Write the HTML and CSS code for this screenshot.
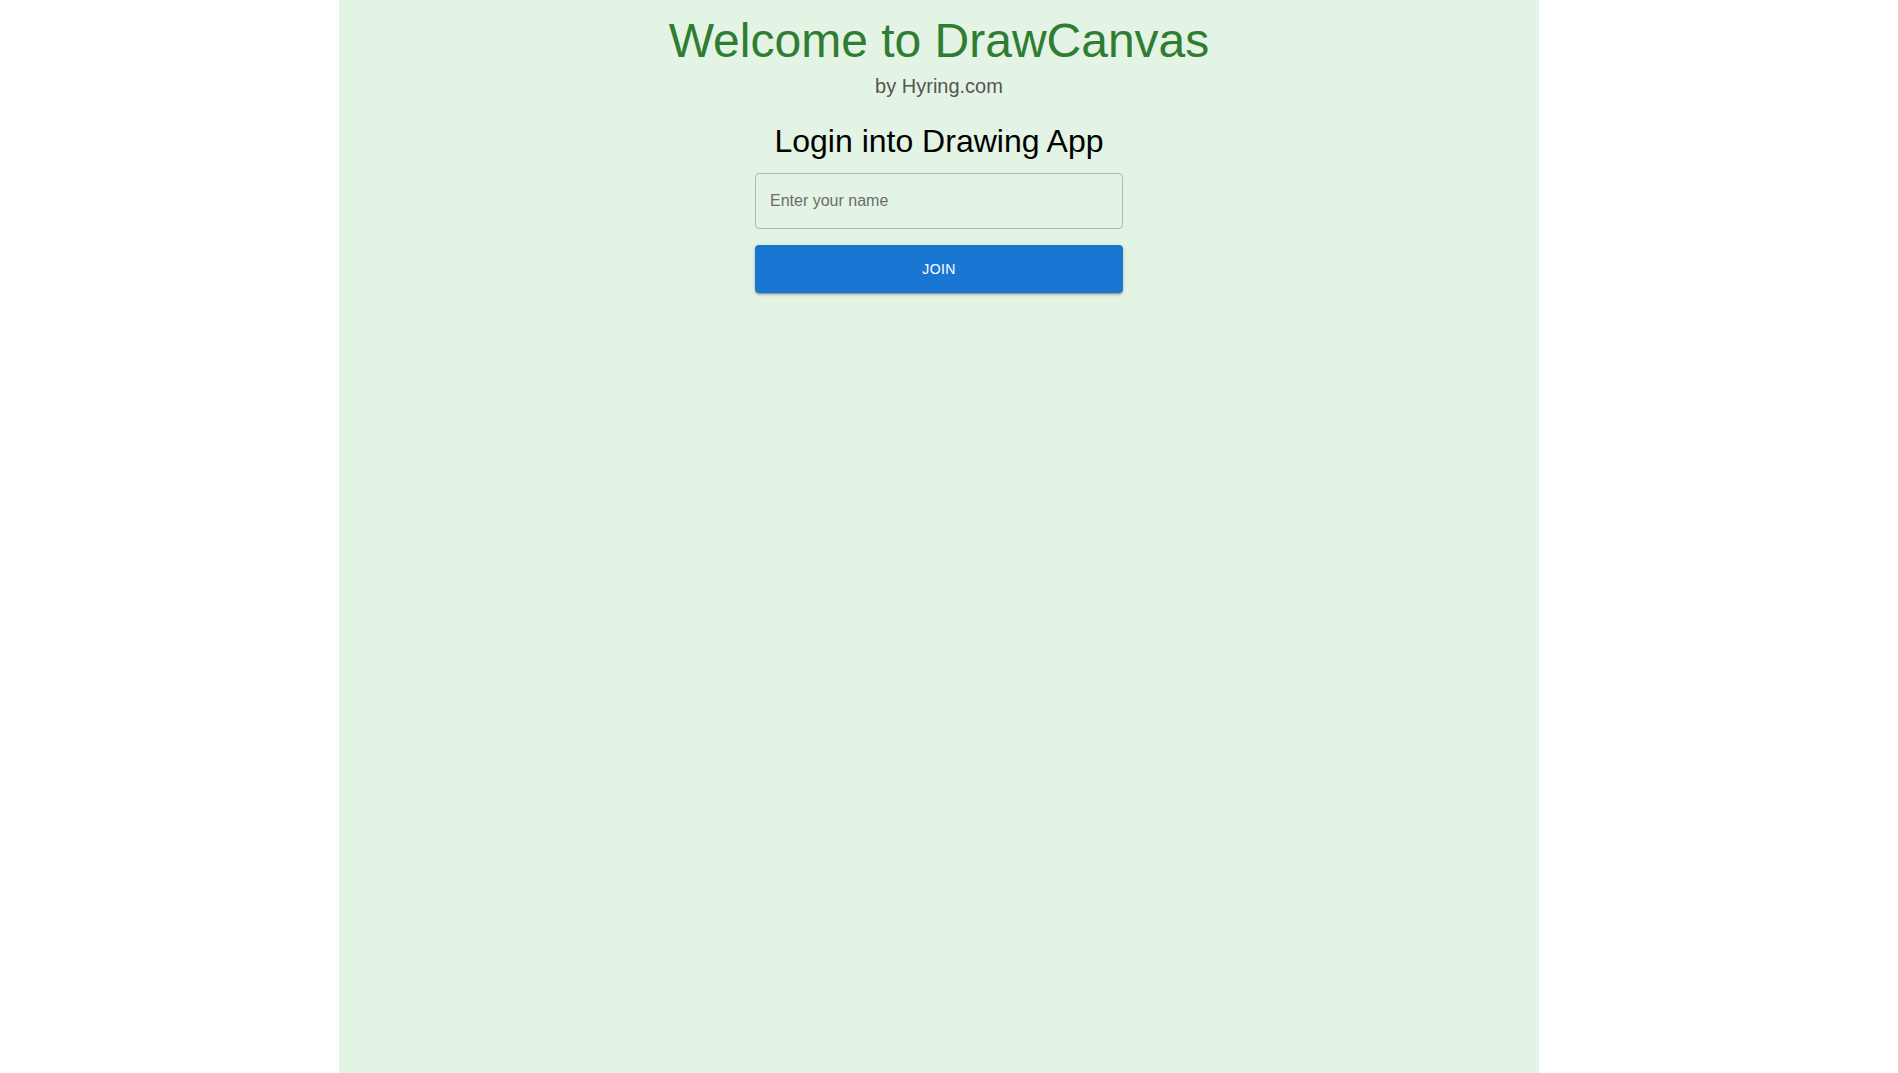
FILE: index.html
```html
<!DOCTYPE html>
<html lang="en">
<head>
<meta charset="utf-8">
<title>DrawCanvas</title>
<link rel="stylesheet" href="styles.css">
</head>
<body>
<div class="page">
  <main class="panel">
    <h1 class="title">Welcome to DrawCanvas</h1>
    <p class="sub">by Hyring.com</p>
    <h2 class="login">Login into Drawing App</h2>
    <form class="form">
      <input class="name" type="text" placeholder="Enter your name">
      <button class="join" type="button">Join</button>
    </form>
  </main>
</div>
</body>
</html>
```
FILE: styles.css
```css
html, body {
  margin: 0;
  padding: 0;
  background: #ffffff;
  font-family: "Liberation Sans", Arial, sans-serif;
}
.page {
  display: flex;
  justify-content: center;
  padding-right: 20px;
  min-height: 100vh;
}
.panel {
  width: 1200px;
  min-height: 100vh;
  background: #e3f3e4;
  display: flex;
  flex-direction: column;
  align-items: center;
}
.title {
  margin: 13px 0 0;
  font-size: 48px;
  font-weight: 400;
  line-height: normal;
  color: #2e7d32;
}
.sub {
  margin: 7px 0 0;
  font-size: 20px;
  line-height: normal;
  color: #555555;
}
.login {
  margin: 25px 0 0;
  font-size: 32px;
  font-weight: 400;
  line-height: normal;
  color: #000000;
}
.form {
  margin-top: 13px;
  width: 368px;
  display: flex;
  flex-direction: column;
  gap: 16px;
}
.name {
  box-sizing: border-box;
  height: 56px;
  width: 100%;
  padding: 0 14px;
  border: 1px solid rgba(0, 0, 0, 0.23);
  border-radius: 4px;
  background: transparent;
  font-family: "Liberation Sans", Arial, sans-serif;
  font-size: 16px;
  color: #222;
  outline: none;
}
.name::placeholder {
  color: #6a6d6a;
  opacity: 1;
}
.join {
  box-sizing: border-box;
  height: 48px;
  width: 100%;
  border: none;
  border-radius: 4px;
  background: #1976d2;
  color: #ffffff;
  font-family: "Liberation Sans", Arial, sans-serif;
  font-size: 14px;
  font-weight: 400;
  letter-spacing: 0.4px;
  text-transform: uppercase;
  cursor: pointer;
  box-shadow: 0px 3px 1px -2px rgba(0,0,0,0.2), 0px 2px 2px 0px rgba(0,0,0,0.14), 0px 1px 5px 0px rgba(0,0,0,0.12);
}
```
